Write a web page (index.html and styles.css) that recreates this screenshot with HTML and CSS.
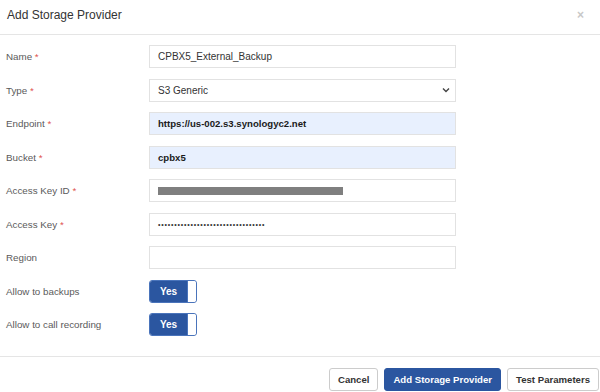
FILE: index.html
```html
<!DOCTYPE html>
<html lang="en">
<head>
<meta charset="UTF-8" />
<title>Add Storage Provider</title>
<link rel="stylesheet" href="styles.css">
</head>
<body>
  <div class="modal">
    <div class="modal-header">
      <h4>Add Storage Provider</h4>
      <span class="close">&times;</span>
    </div>
    <div class="modal-body">
      <div class="row">
        <label>Name <span class="req">*</span></label>
        <div class="field">CPBX5_External_Backup</div>
      </div>
      <div class="row">
        <label>Type <span class="req">*</span></label>
        <div class="field select">
          <span>S3 Generic</span>
          <svg width="8" height="6" viewBox="0 0 8 6"><path d="M1 1.5 L4 4.5 L7 1.5" fill="none" stroke="#444" stroke-width="1.4"/></svg>
        </div>
      </div>
      <div class="row">
        <label>Endpoint <span class="req">*</span></label>
        <div class="field autofill">https://us-002.s3.synologyc2.net</div>
      </div>
      <div class="row">
        <label>Bucket <span class="req">*</span></label>
        <div class="field autofill">cpbx5</div>
      </div>
      <div class="row">
        <label>Access Key ID <span class="req">*</span></label>
        <div class="field"><span class="redacted"></span></div>
      </div>
      <div class="row">
        <label>Access Key <span class="req">*</span></label>
        <div class="field"><span class="dots">•••••••••••••••••••••••••••••••••</span></div>
      </div>
      <div class="row">
        <label>Region</label>
        <div class="field"></div>
      </div>
      <div class="row">
        <label>Allow to backups</label>
        <div class="toggle"><span class="on">Yes</span><span class="knob"></span></div>
      </div>
      <div class="row">
        <label>Allow to call recording</label>
        <div class="toggle"><span class="on">Yes</span><span class="knob"></span></div>
      </div>
    </div>
    <div class="modal-footer">
      <button class="btn">Cancel</button>
      <button class="btn primary">Add Storage Provider</button>
      <button class="btn">Test Parameters</button>
    </div>
  </div>
</body>
</html>
```

FILE: styles.css
```css
* {
  box-sizing: border-box;
}
body {
  margin: 0;
  background: #fff;
  font-family: 'Liberation Sans', Arial, sans-serif;
  color: #333;
}
.modal {
  width: 600px;
  height: 392px;
  overflow: hidden;
}
.modal-header {
  height: 35px;
  border-bottom: 1px solid #e5e5e5;
  padding: 8px 16px 0 7px;
  display: flex;
  justify-content: space-between;
}
.modal-header h4 {
  margin: 0;
  font-size: 12px;
  line-height: 14px;
  font-weight: normal;
  color: #333;
}
.close {
  font-size: 12px;
  line-height: 14px;
  font-weight: bold;
  color: #c8c8c8;
}
.modal-body {
  padding: 10px 0 20px 6px;
  display: flex;
  flex-direction: column;
  gap: 10.5px;
}
.row {
  display: flex;
  align-items: center;
  height: 23px;
}
.row label {
  width: 143px;
  font-size: 9.8px;
  color: #5a5a5a;
}
.req {
  color: #e0524d;
}
.field {
  width: 307px;
  height: 23px;
  border: 1px solid #e2e2e2;
  padding: 0 8px;
  font-size: 10px;
  color: #333;
  display: flex;
  align-items: center;
}
.field.autofill {
  background: #e8f0fe;
  color: #1a1a1a;
  font-weight: bold;
  font-size: 9.6px;
}
.select {
  justify-content: space-between;
  padding-right: 5px;
}
.redacted {
  width: 185px;
  height: 8px;
  background: #7f7f7f;
}
.dots {
  font-size: 7px;
  letter-spacing: 0.8px;
  color: #333;
}
.toggle {
  width: 48px;
  height: 23px;
  display: flex;
  border: 1px solid #4a74bb;
  border-radius: 3px;
  overflow: hidden;
}
.toggle .on {
  flex: 1;
  background: #2b56a0;
  color: #fff;
  font-size: 10px;
  font-weight: bold;
  display: flex;
  align-items: center;
  justify-content: center;
}
.toggle .knob {
  width: 9px;
  background: #fff;
  border-left: 1px solid #4a74bb;
  border-radius: 0 2px 2px 0;
}
.modal-footer {
  border-top: 1px solid #e5e5e5;
  padding: 11px 1px 0 0;
  display: flex;
  justify-content: flex-end;
  gap: 6px;
}
.btn {
  height: 23px;
  padding: 0 8px;
  font-family: 'Liberation Sans', Arial, sans-serif;
  font-size: 9.6px;
  font-weight: bold;
  color: #333;
  background: #fff;
  border: 1px solid #ccc;
  border-radius: 3px;
}
.btn.primary {
  background: #2b56a0;
  border-color: #2b56a0;
  color: #fff;
}
```
